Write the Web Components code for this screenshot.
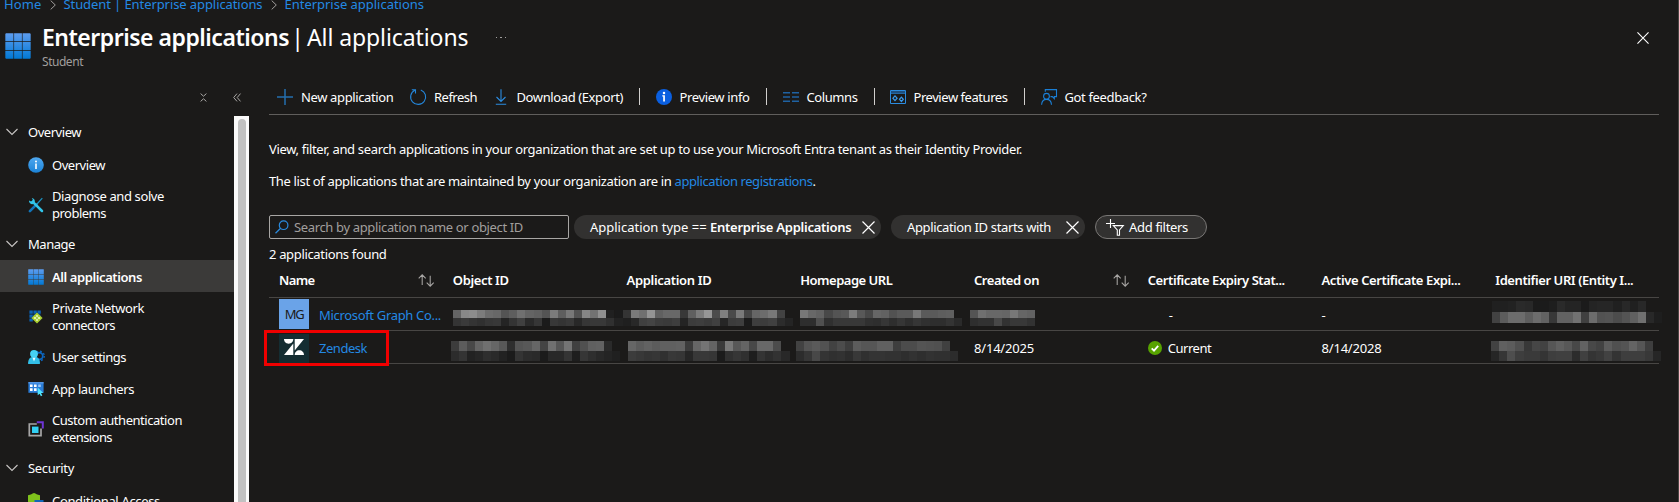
<!DOCTYPE html>
<html lang="en">
<head>
<meta charset="utf-8">
<title>Enterprise applications | All applications</title>
<style>
html,body{margin:0;background:#1b1a19;height:502px;overflow:hidden}
body{font-family:"Noto Sans","Open Sans",sans-serif;font-size:13px;color:#fff}
</style>
</head>
<body>
<entra-page></entra-page>
<script>
const define=(name,html,setup)=>{
  const t=document.createElement('template');t.innerHTML=html;
  customElements.define(name,class extends HTMLElement{
    connectedCallback(){
      if(this.shadowRoot)return;
      this.attachShadow({mode:'open'});
      this.shadowRoot.append(t.content.cloneNode(true));
      if(setup)setup(this,this.shadowRoot);
    }
  });
};

/* Single-line label tracked to a given width */
define('ui-text','<style>:host{display:inline-block;white-space:pre;flex:none}</style><span><slot></slot></span>',(el,root)=>{
  const w=+el.getAttribute('w');
  if(!w)return;
  const n=el.textContent.length, span=root.querySelector('span');
  const natural=span.getBoundingClientRect().width;
  if(natural)el.style.letterSpacing=((w-natural)/n).toFixed(4)+'px';
});

const ICONS={
grid:[16,16,'<defs><linearGradient id="g" x1="0" y1="0" x2="0" y2="16" gradientUnits="userSpaceOnUse"><stop offset="0" stop-color="#5e9df0"/><stop offset="1" stop-color="#0078d4"/></linearGradient></defs><path fill="url(#g)" d="M.6.2h4.6v4.9H.2V.6zM5.6.2h4.8v4.9H5.6zM10.8.2h4.6l.4.4v4.5h-5zM.2 5.5h5v5h-5zM5.6 5.5h4.8v5H5.6zM10.8 5.5h5v5h-5zM.2 10.9h5v4.9H.6l-.4-.4zM5.6 10.9h4.8v4.9H5.6zM10.8 10.9h5v4.5l-.4.4h-4.6z"/>'],
info:[16,16,'<defs><linearGradient id="g" x1="0" y1="0" x2="0" y2="1"><stop offset="0" stop-color="#4fa8f0"/><stop offset="1" stop-color="#1b82d6"/></linearGradient></defs><circle cx="8" cy="8" r="7.8" fill="url(#g)"/><circle cx="8" cy="4.6" r="1" fill="#fff"/><path d="M7.2 6.6h1.6V12H7.2z" fill="#fff"/>'],
infosolid:[16,16,'<circle cx="8" cy="8" r="8" fill="#0a5fe0"/><circle cx="8" cy="3.9" r="1.25" fill="#fff"/><path d="M6.3 6.3h2.6v6.3H7.2V7.6h-.9z" fill="#fff"/>'],
tools:[16,16,'<path d="M1.9 14.1L8.6 7.4" stroke="#1274b8" stroke-width="2.6" stroke-linecap="round"/><path d="M9 7l5.3-5.8" stroke="#1b93c4" stroke-width="1.2"/><path d="M4.8 4.8L14 14" stroke="#32c5ea" stroke-width="2.5" stroke-linecap="round"/><path d="M1 3.4l2.1 1.2L4.9 3 3.8.9a3.3 3.3 0 0 1 2.9 4.4L5 7.1A3.3 3.3 0 0 1 1 3.4z" fill="#32c5ea"/>'],
private:[16,16,'<path fill="#0b62b5" d="M1.400 1.400h3.400v3.400H1.400zM5.400 1.400h3.400v3.400H5.400zM9.400 1.400h3.400v3.400H9.400zM1.400 5.400h3.400v3.400H1.400zM5.400 5.400h3.400v3.400H5.400zM1.400 9.400h3.400v3H1.400zM9.400 5.400h3v3h-3z"/><path d="M9 3.400L14.600 9 9 14.600 3.400 9z" fill="#a9cf2f"/><path d="M9 5.900v6.200M5.900 9h6.200" stroke="#f2ffd0" stroke-width="1.300"/><circle cx="9" cy="9" r=".9" fill="#7fae15"/>'],
user:[16,16,'<g fill="none" stroke="#0c67c2"><circle cx="11.400" cy="7" r="3.400" stroke-width="1.800"/><circle cx="11.400" cy="7" r="4.900" stroke-width="1.300" stroke-dasharray="1.900 1.950"/></g><path d="M0 14.200c.3-3.800 1.600-6.500 6-6.500s5.800 2.700 6 6.500c0 .6-.4.8-1 .8H1c-.6 0-1-.2-1-.8z" fill="#32bfe8"/><circle cx="6" cy="4.800" r="3.900" fill="#45d2f4"/><path d="M4.500 8.700h3L6 12.500z" fill="#e8fbff"/>'],
launch:[16,16,'<path fill="#2b7cd6" d="M.4 1.200h15.200v10.600H.4z"/><path d="M.4 1.200h15.200v1.200H.4z" fill="#5ea0ef"/><path fill="#fff" d="M2 3.500h2.600v2.600H2zM6 3.500h2.600v2.600H6zM2 7.300h2.600v2.600H2zM6 7.300h2.600v2.600H6z"/><path fill="#9cc8f7" d="M10.200 3.500h2.600v2.600h-2.600z"/><path d="M9.700 6.600l5.600 5.300-2.300.2 1.300 2.500-1.400.7-1.300-2.600-1.900 1.500z" fill="#50e6ff"/>'],
custom:[16,16,'<path d="M8.800 3H1.300v11.700H13V7.500" stroke="#a6a6a6" stroke-width="1.700" fill="none"/><path d="M8.800 1.200h6v6.300" stroke="#6f35d6" stroke-width="2" fill="none"/><path d="M4 5.600h6.500V12H4z" fill="#32d0f3"/>'],
shield:[16,16,'<path d="M0 2.200C3 2.200 4 .5 6 .1c2 .4 3 2.100 6 2.100V8c0 3-3 5.500-6 7-3-1.500-6-4-6-7z" fill="#7fc21c"/><path d="M6.500 7h9v8h-9z" fill="#1267b8"/>'],
plus:[16,16,'<path d="M8 0v16M0 8h16" stroke="#256fae" stroke-width="1.500"/>'],
refresh:[16,16,'<path d="M10.800 .9A7.500 7.500 0 1 1 4.800 1.200M1.800.7h3.700v3.800" fill="none" stroke="#2485d8" stroke-width="1.100"/>'],
download:[12,16,'<path d="M6 .3v12M1.500 8L6 12.400 10.500 8M.8 15.200h10.400" fill="none" stroke="#2b8ce0" stroke-width="1.100"/>'],
columns:[16,12,'<path d="M0 1.800h7M9 1.800h7M0 6h7M9 6h7M0 10.200h7M9 10.200h7" stroke="#1f62a3" stroke-width="1.400"/>'],
features:[16,14,'<path d="M.5.5h15v13H.5zM.5 3.200h15" fill="none" stroke="#2b8ce0"/><path d="M1 1h14v2H1z" fill="#1d4f80"/><path d="M5 5.800l2.100 2.400L5 10.600 2.900 8.200zM11.400 7.100l1.900 2.200-1.900 2.200-1.900-2.200z" fill="none" stroke="#3a9bee" stroke-width="1.200"/>'],
feedback:[16,16,'<g fill="none" stroke="#1a7fd6" stroke-width="1.100"><circle cx="5.500" cy="7.300" r="2.900"/><path d="M.6 15.800c.2-3.300 2-5.400 4.900-5.400s4.800 2.100 5 5.400M4.300 2.700V.6h11.200v7h-2.200v2l-2-2H9.500"/></g>'],
search:[14,14,'<g fill="none" stroke="#2b8ce0" stroke-width="1.200"><circle cx="8.600" cy="5.200" r="4.300"/><path d="M5.600 8.300L.5 13.300"/></g>'],
x:[13,13,'<path d="M.5.5l12 12M12.500.5l-12 12" stroke="#fff" stroke-width="1.200"/>'],
filter:[18,17,'<path d="M4.500 0v9M0 4.500h9" stroke="#fff" stroke-width="1.100"/><path d="M7.300 6.600h10L13.500 11v5.300h-2.200V11z" fill="none" stroke="#fff" stroke-width="1.100"/>'],
sort:[16,13,'<path d="M4.200 11V.8M.7 4.300L4.200.8l3.500 3.500M12.200 1.800v10.400M8.700 8.700l3.500 3.500 3.500-3.500" fill="none" stroke="#a8a6a4" stroke-width="1.050"/>'],
chev:[12,8,'<path d="M.5 1L6 6.500 11.500 1" fill="none" stroke="#c8c6c4" stroke-width="1.100"/>'],
crumb:[6,10,'<path d="M.7.600L5.300 5 .7 9.400" fill="none" stroke="#a19f9d" stroke-width="1"/>'],
collapse:[7,9,'<path d="M.6 .6L3.500 3.200 6.400.6M.6 8.400l2.900-2.600 2.900 2.600" fill="none" stroke="#a8a6a4"/>'],
dbl:[8,9,'<path d="M4 .6L.7 4.500 4 8.400M7.500.6L4.200 4.500l3.300 3.900" fill="none" stroke="#a8a6a4"/>'],
check:[14,14,'<circle cx="7" cy="7" r="7" fill="#57a300"/><path d="M3.700 7.300L6 9.600l4.200-4.800" fill="none" stroke="#fff" stroke-width="1.800"/>'],
zen:[20,16,'<path d="M0 0h9.300c0 2.600-2 4.700-4.650 4.700S0 2.600 0 0zM9.300 4.600V16H0zM10.700 0H20l-9.300 11.400zM10.700 16c0-2.600 2-4.700 4.650-4.700S20 13.400 20 16z" fill="#fff"/>']
};
define('ui-icon','<style>:host{display:inline-flex;flex:none}svg{display:block;overflow:visible}</style><span></span>',(el,root)=>{
  const [w,h,body]=ICONS[el.getAttribute('name')], s=+el.getAttribute('size')||w;
  root.querySelector('span').innerHTML=`<svg width="${s}" height="${h*s/w}" viewBox="0 0 ${w} ${h}">${body}</svg>`;
});

/* Pixelated value: rows of 8px grey cells, two hex digits per cell */
define('redacted-value','<style>:host{display:block;flex:none}div{display:flex;height:var(--h,8px)}i{width:8.080px;flex:none}</style>',(el,root)=>{
  for(const row of el.getAttribute('rows').split('|')){
    const d=document.createElement('div');
    for(const c of row.trim().split(/\s+/)){const i=document.createElement('i');i.style.background=`#${c}${c}${c}`;d.append(i)}
    root.append(d);
  }
});

define('bread-crumbs',`<style>:host{display:flex;align-items:center;height:20px;margin-top:-6px;padding-left:4px;color:#2389e3;line-height:20px}
ui-icon{margin:2px 8px 0 8px}</style>
<ui-text w="37.500">Home</ui-text><ui-icon name="crumb"></ui-icon><ui-text w="199">Student | Enterprise applications</ui-text><ui-icon name="crumb"></ui-icon><ui-text w="139.500">Enterprise applications</ui-text>`);

define('page-header',`<style>:host{display:flex;height:66px;padding:0 29px 0 5px;box-sizing:border-box}
.logo{margin:19px 11px 0 0}.t{display:flex;flex-direction:column;flex:1}
.h{display:flex;align-items:center;font-size:23px;line-height:32px;margin-top:7px}.h b{font-weight:600}.bar{margin:0 1.500px 0 -1.500px}
.s{font-size:12px;line-height:16px;color:#a19f9d;margin-top:1px}.dots{display:flex;gap:3px;margin:1px 0 0 27px}.dots i{width:1.500px;height:1.500px;background:#a19f9d}
.x{margin-top:18px}</style>
<ui-icon class="logo" name="grid" size="26"></ui-icon>
<div class="t"><div class="h"><b><ui-text w="247">Enterprise applications</ui-text></b><ui-text class="bar" w="18"> | </ui-text><ui-text w="161.500">All applications</ui-text><span class="dots"><i></i><i></i><i></i></span></div><div class="s"><ui-text w="41">Student</ui-text></div></div>
<ui-icon class="x" name="x" size="12"></ui-icon>`);

define('nav-section',`<style>:host{display:block}.h{display:flex;align-items:center;height:31px;padding:0 0 1px 6px;gap:10px}.h ui-icon{margin-top:1px}</style>
<div class="h"><ui-icon name="chev"></ui-icon><slot name="title"></slot></div><slot></slot>`);
define('nav-item',`<style>:host{display:flex;align-items:center;height:32px;box-sizing:border-box;padding:2px 0 0 28px;gap:8px;line-height:17px}
:host([tall]){height:48px}:host([selected]){background:#3b3a39;font-weight:600}
.l{display:flex;flex-direction:column;align-items:flex-start}</style><slot name="icon"></slot><div class="l"><slot></slot></div>`,(el)=>{
  const n=document.createElement('ui-icon');n.setAttribute('name',el.getAttribute('icon'));n.slot='icon';el.prepend(n);
});
define('scroll-rail','<style>:host{display:flex;width:15px;background:#fafafa;justify-content:center;flex:none}div{width:8px;background:#c1c1c1;border-radius:4px 4px 0 0;margin-top:3px}</style><div></div>');
define('side-nav',`<style>:host{display:flex;flex-direction:column;width:249px;flex:none}.tools{display:flex;height:36px;align-items:center;padding-left:199.500px;gap:26px;box-sizing:border-box;flex:none}.tools ui-icon{margin-top:-2px}
.b{display:flex;height:386px;overflow:hidden}.n{width:234px}</style>
<div class="tools"><ui-icon name="collapse"></ui-icon><ui-icon name="dbl"></ui-icon></div>
<div class="b"><div class="n">
<nav-section><ui-text slot="title" w="53">Overview</ui-text>
<nav-item icon="info"><ui-text w="53">Overview</ui-text></nav-item>
<nav-item icon="tools" tall><ui-text w="112">Diagnose and solve</ui-text><ui-text w="54">problems</ui-text></nav-item></nav-section>
<nav-section><ui-text slot="title" w="47">Manage</ui-text>
<nav-item icon="grid" selected><ui-text w="90">All applications</ui-text></nav-item>
<nav-item icon="private" tall><ui-text w="92">Private Network</ui-text><ui-text w="63">connectors</ui-text></nav-item>
<nav-item icon="user"><ui-text w="74">User settings</ui-text></nav-item>
<nav-item icon="launch"><ui-text w="82">App launchers</ui-text></nav-item>
<nav-item icon="custom" tall><ui-text w="130">Custom authentication</ui-text><ui-text w="60">extensions</ui-text></nav-item></nav-section>
<nav-section><ui-text slot="title" w="46">Security</ui-text>
<nav-item icon="shield"><ui-text w="108">Conditional Access</ui-text></nav-item></nav-section>
</div><scroll-rail></scroll-rail></div>`);

define('command-bar',`<style>:host{display:flex;height:34px;align-items:center;border-bottom:1px solid #605e5c;padding-left:8px;box-sizing:content-box}
ui-icon{margin-top:-1px}ui-text{margin-left:8px}i{width:1px;height:17px;background:#d2d0ce;flex:none;margin:-2px 16px 0}</style>
<ui-icon name="plus"></ui-icon><ui-text w="92.500">New application</ui-text>
<ui-icon style="margin-left:16.500px" name="refresh"></ui-icon><ui-text w="43">Refresh</ui-text>
<ui-icon style="margin-left:17.500px" name="download"></ui-icon><ui-text style="margin-left:10px" w="106.500">Download (Export)</ui-text><i style="margin-left:15.500px"></i>
<ui-icon name="infosolid"></ui-icon><ui-text w="70">Preview info</ui-text><i></i>
<ui-icon name="columns"></ui-icon><ui-text w="51">Columns</ui-text><i style="margin-right:15.500px"></i>
<ui-icon name="features"></ui-icon><ui-text w="94" style="margin-left:7.500px">Preview features</ui-text><i></i>
<ui-icon name="feedback"></ui-icon><ui-text w="82">Got feedback?</ui-text>`);

define('filter-chip',`<style>:host{display:flex;align-items:center;height:24px;border-radius:12px;background:#323130;padding:0 7px 0 16px;box-sizing:border-box;flex:none;gap:10px}
:host([add]){border:1px solid #797775;padding:0 18px 0 10px;gap:5px}.l{display:flex}</style><slot name="lead"></slot><span class="l"><slot></slot></span><slot name="end"></slot>`);
define('filter-bar',`<style>:host{display:flex;height:24px}.s{width:300px;height:24px;box-sizing:border-box;border:1px solid #a8a6a4;border-radius:2px;display:flex;align-items:center;padding-left:5px;gap:5px;color:#a19f9d;margin-right:5px;flex:none}.s ui-icon{margin-top:-1px}b{font-weight:600}</style>
<div class="s"><ui-icon name="search"></ui-icon><ui-text w="229">Search by application name or object ID</ui-text></div>
<filter-chip style="width:307px;margin-right:10px"><ui-text w="120">Application type == </ui-text><b><ui-text w="141.500">Enterprise Applications</ui-text></b><ui-icon slot="end" name="x"></ui-icon></filter-chip>
<filter-chip style="width:194px;margin-right:10px;gap:15px"><ui-text w="144">Application ID starts with</ui-text><ui-icon slot="end" name="x"></ui-icon></filter-chip>
<filter-chip add><ui-icon slot="lead" name="filter"></ui-icon><ui-text w="59">Add filters</ui-text></filter-chip>`);

define('grid-row',`<style>:host{display:grid;grid-template-columns:repeat(7,173.750px) 1fr;height:32px;padding-left:10px;border-bottom:1px solid #484644;align-items:center}
:host([head]){font-weight:600;height:28px;padding-bottom:3px}</style><slot></slot>`);
define('app-table',`<style>:host{display:block;position:relative}
.c{display:flex;align-items:center;min-width:0;height:100%}
.name{gap:10px;color:#2389e3}.tile{width:30px;height:30px;display:flex;align-items:center;justify-content:center;background:#6aa3e8;color:#1b1a19;flex:none}
.z{background:#142d32;height:29px;margin-top:2px}.z ui-icon{margin-top:-3px}
.s{margin-left:auto;margin-right:19px}
.r1 redacted-value{margin-top:8px}.r2 redacted-value{margin-top:7px;--h:10px}
.mark{position:absolute;left:-5px;top:64px;width:119px;height:30px;border:3px solid #f00000}
</style>
<grid-row head><div class="c"><ui-text w="35.500">Name</ui-text><ui-icon class="s" name="sort"></ui-icon></div><div class="c"><ui-text w="56">Object ID</ui-text></div><div class="c"><ui-text w="85">Application ID</ui-text></div><div class="c"><ui-text w="92">Homepage URL</ui-text></div><div class="c"><ui-text w="65">Created on</ui-text><ui-icon class="s" name="sort"></ui-icon></div><div class="c"><ui-text w="137">Certificate Expiry Stat...</ui-text></div><div class="c"><ui-text w="139">Active Certificate Expi...</ui-text></div><div class="c"><ui-text w="138">Identifier URI (Entity I...</ui-text></div></grid-row>
<grid-row class="r1"><div class="c name"><span class="tile"><ui-text w="18.500">MG</ui-text></span><ui-text w="122" style="margin-top:2px">Microsoft Graph Co...</ui-text></div>
<div class="c"><redacted-value rows="64 88 8c 7c 6c 68 54 5e 70 64 60 54 7c 5e 78 52 86 72 90 20|34 3a 34 30 36 38 24 34 40 2a 36 1b 38 34 38 28 36 38 38 30 22"></redacted-value></div>
<div class="c"><redacted-value style="margin-left:-11.500px" rows="1b 34 7a 70 94 60 68 68 38 60 7c 96 4c 80 4a 7a 46 66 6c 78 42|22 1f 28 40 44 3c 3a 3e 24 3c 3e 3a 40 26 3c 3e 1b 3e 3c 40 2c 24"></redacted-value></div>
<div class="c"><redacted-value rows="78 68 62 48 54 58 7c 58 48 66 62 52 5a 5a 78 5a 5a 5e 60|2e 2e 50 30 38 38 38 38 30 2e 36 2e 36 2e 36 30 2e 2e 34 2a"></redacted-value></div>
<div class="c"><redacted-value style="margin-left:-4px" rows="54 70 68 68 66 78 66 62|2e 32 32 48 32 38 38 32"></redacted-value></div>
<div class="c"><ui-text style="margin-left:21px;margin-top:2px">-</ui-text></div><div class="c"><ui-text style="margin-top:2px">-</ui-text></div>
<div class="c"><redacted-value style="margin-left:-3px;margin-top:-5px;--h:11px" rows="20 20 22 2a 28 1b 1b 1e 2a 24 24 1b 24 26 26 20 28 20 28|42 5c 6c 6c 5e 6c 62 38 62 62 72 40 6c 52 54 4c 54 60 70 28 1e"></redacted-value></div></grid-row>
<grid-row class="r2"><div class="c name"><span class="tile z"><ui-icon name="zen"></ui-icon></span><ui-text w="48" style="margin-top:2px">Zendesk</ui-text></div>
<div class="c"><redacted-value style="margin-left:-2px" rows="3c 5c 48 64 70 66 58 2e 54 58 66 44 70 56 74 40 50 60 62 2a|2c 34 22 26 2e 2a 22 1b 34 2c 2a 1b 28 28 34 1e 36 2e 28 24 20"></redacted-value></div>
<div class="c"><redacted-value style="margin-left:1.500px" rows="66 5c 62 5c 60 60 62 3c 66 74 64 3a 78 58 64 48 68 68 4c|3c 38 34 36 30 38 36 26 38 38 36 1b 30 36 30 1e 34 2c 32 28"></redacted-value></div>
<div class="c"><redacted-value style="margin-left:-4px" rows="42 54 5a 52 42 4c 3e 5c 56 56 60 60 3e 4c 4c 54 52 50 40|2c 36 48 34 30 32 2c 38 30 34 34 32 32 2e 32 2e 32 30 30 2c"></redacted-value></div>
<div class="c"><ui-text w="60" style="margin-top:2px">8/14/2025</ui-text></div>
<div class="c"><ui-icon name="check" style="margin-top:2px;margin-right:6px"></ui-icon><ui-text w="43.500" style="margin-top:2px">Current</ui-text></div><div class="c"><ui-text w="60" style="margin-top:2px">8/14/2028</ui-text></div>
<div class="c"><redacted-value style="margin-left:-4px" rows="42 60 5c 50 38 46 42 56 60 58 48 62 48 42 5c 50 54 64 56 3e|26 36 4e 3e 3a 3a 34 3e 40 40 2c 40 34 38 42 34 3e 3e 3e 38 26"></redacted-value></div></grid-row>
<div class="mark"></div>`);

define('entra-page',`<style>:host{display:flex;flex-direction:column;height:502px;box-sizing:border-box;border-right:1px solid #484644;overflow:hidden}
.body{display:flex;gap:20px}main{width:1390px}p{margin:0;line-height:20px;display:flex}.p1{margin-top:24px}.p2{margin-top:12px}a{color:#2389e3;display:flex}filter-bar{margin-top:24px}.count{margin-top:5px}app-table{margin-top:2px}</style>
<bread-crumbs></bread-crumbs><page-header></page-header>
<div class="body"><side-nav></side-nav><main><command-bar></command-bar>
<p class="p1"><ui-text w="753">View, filter, and search applications in your organization that are set up to use your Microsoft Entra tenant as their Identity Provider.</ui-text></p>
<p class="p2"><ui-text w="405.500">The list of applications that are maintained by your organization are in </ui-text><a><ui-text w="138">application registrations</ui-text></a>.</p>
<filter-bar></filter-bar><p class="count"><ui-text w="117.500">2 applications found</ui-text></p>
<app-table></app-table></main></div>`);
</script>
</body>
</html>
